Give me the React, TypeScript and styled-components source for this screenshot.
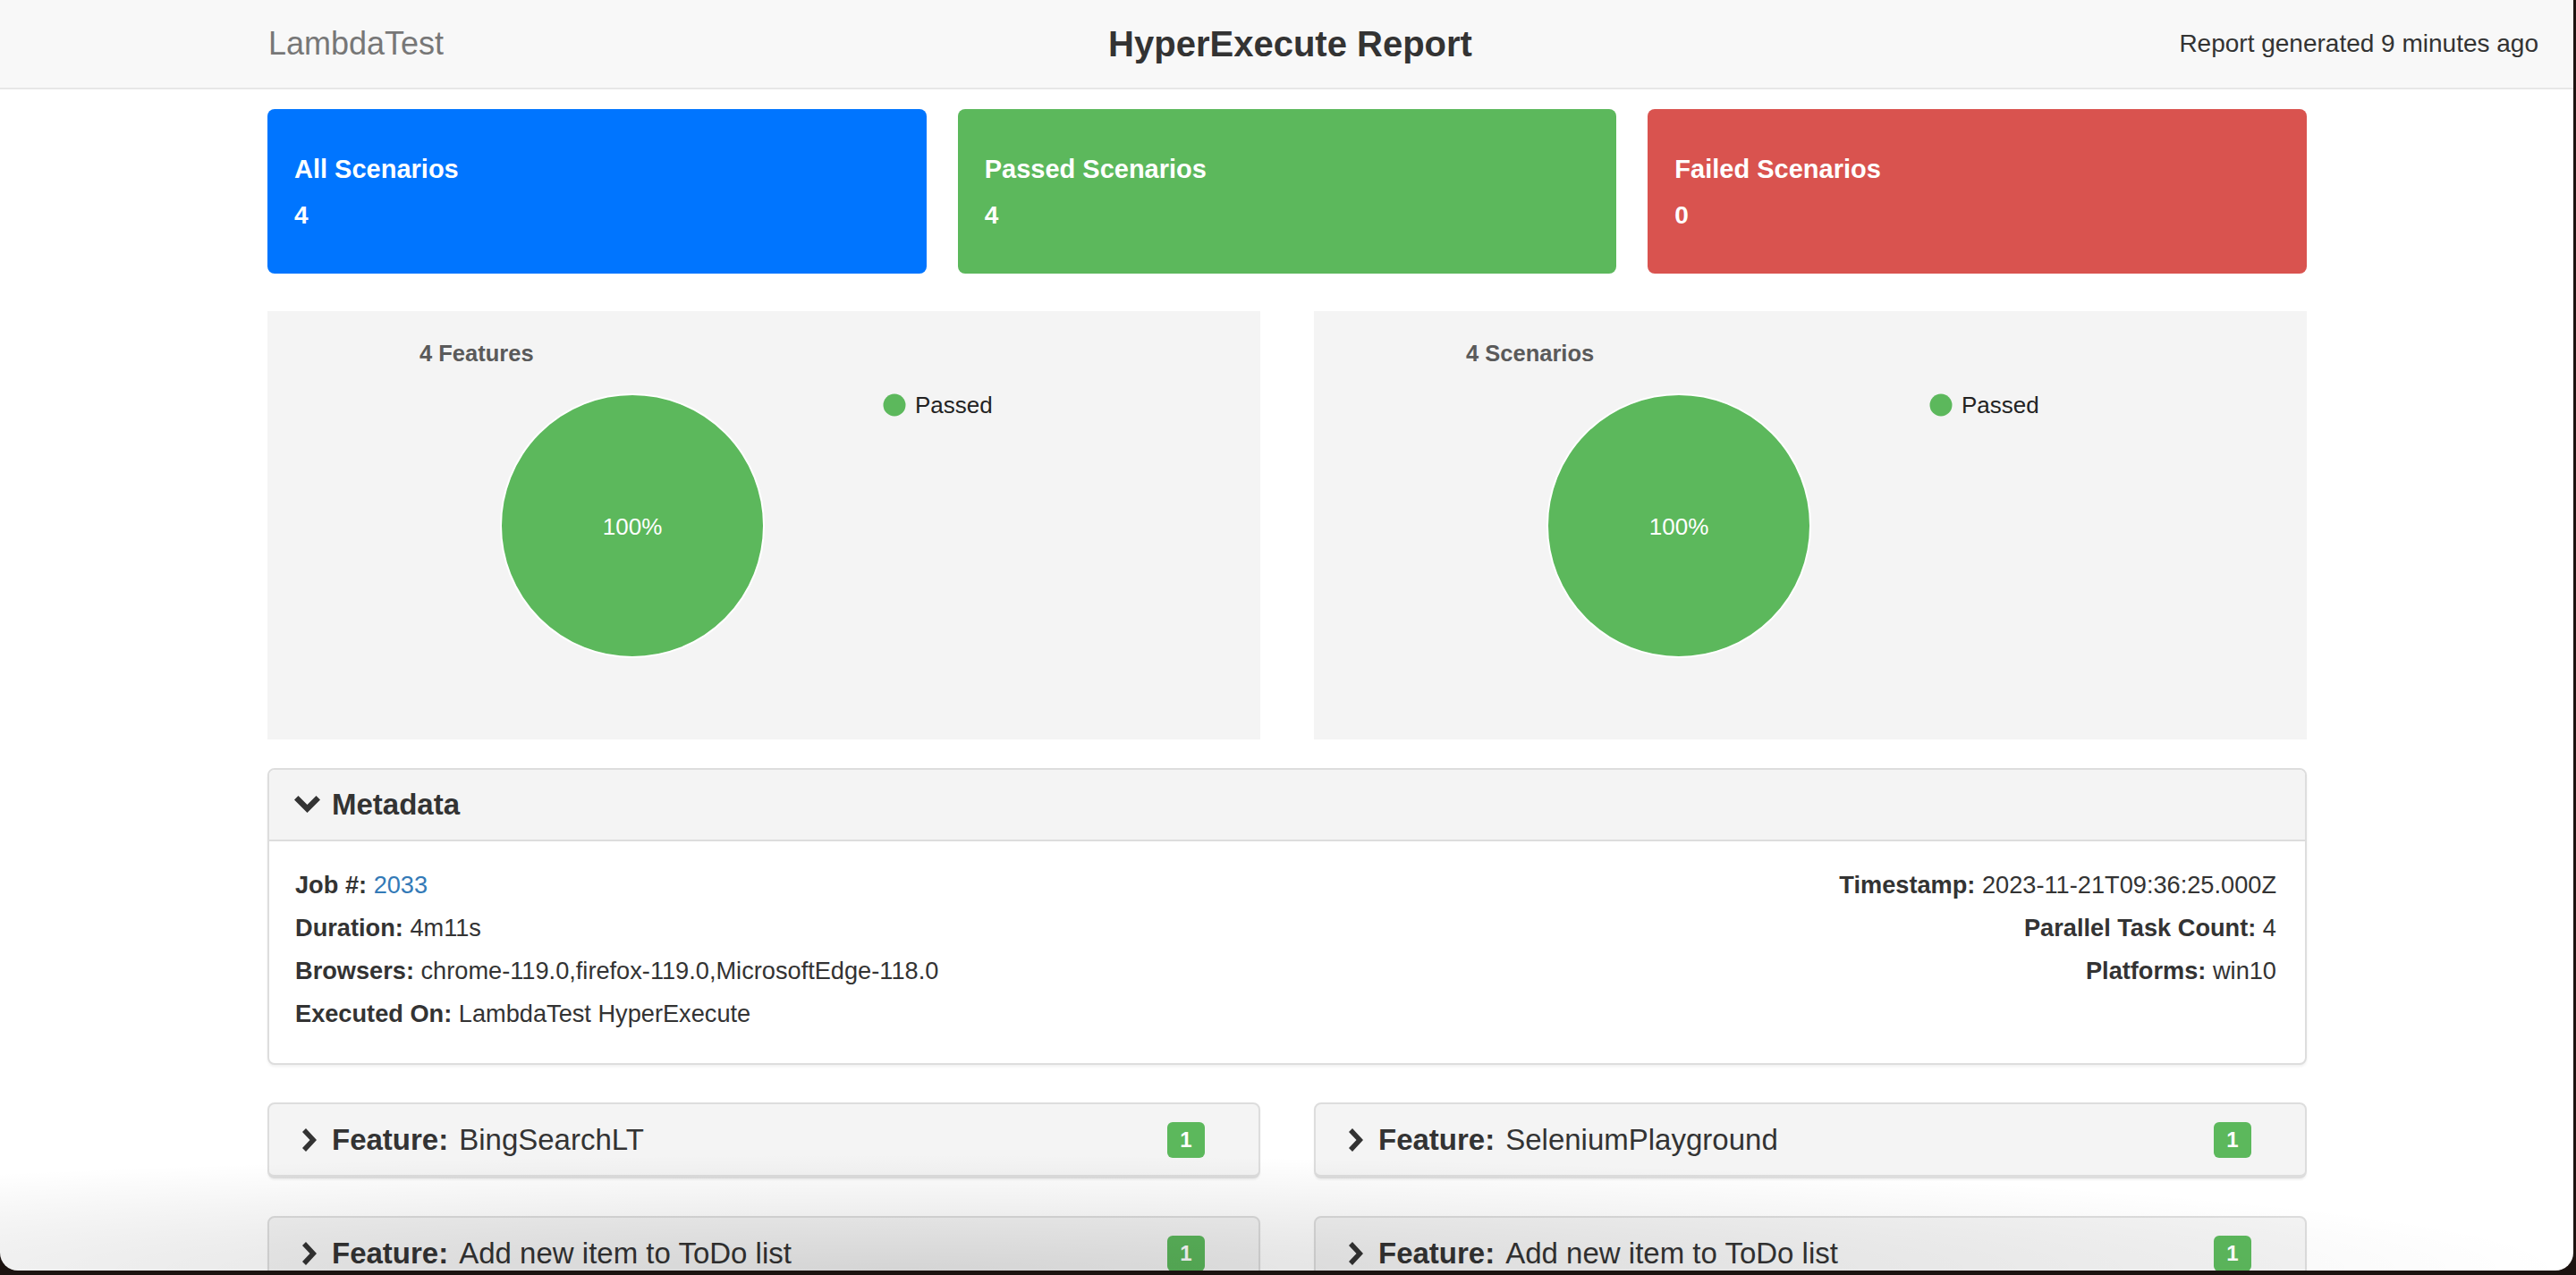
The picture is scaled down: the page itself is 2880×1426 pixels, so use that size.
import React from "react";
import styled, { createGlobalStyle } from "styled-components";

const GlobalStyle = createGlobalStyle`
  html, body { margin: 0; padding: 0; background: #1c1310; }
  body { font-family: "Liberation Sans", Arial, Helvetica, sans-serif; color: #333; }
  * { box-sizing: border-box; }
`;

const Window = styled.div`
  position: relative;
  width: 2877px;
  height: 1421px;
  background: #fff;
  overflow: hidden;
  border-radius: 0 0 20px 20px;
`;

const Navbar = styled.header`
  height: 100px;
  background: #f8f8f8;
  border-bottom: 2px solid #e7e7e7;
  display: grid;
  grid-template-columns: 1fr auto 1fr;
  align-items: center;
  padding: 0 39px;
`;

const Brand = styled.div`
  margin-left: 261px;
  font-size: 36px;
  color: #777;
`;

const Title = styled.h1`
  margin: 0 0 0 8px;
  font-size: 40px;
  font-weight: bold;
  color: #333;
`;

const Generated = styled.div`
  justify-self: end;
  font-size: 28px;
  color: #333;
`;

const Main = styled.main`
  width: 2280px;
  margin-left: 299px;
  padding-top: 22px;
`;

const SummaryRow = styled.div`
  display: grid;
  grid-template-columns: repeat(3, 1fr);
  gap: 35px;
  margin-bottom: 42px;
`;

const SummaryCard = styled.div<{ $bg: string }>`
  height: 184px;
  border-radius: 8px;
  background: ${(p) => p.$bg};
  color: #fff;
  display: flex;
  flex-direction: column;
  justify-content: center;
  gap: 16px;
  padding: 2px 30px 0;
`;

const CardTitle = styled.div`
  font-size: 29px;
  font-weight: bold;
  line-height: 36px;
`;

const CardCount = styled.div`
  font-size: 28px;
  font-weight: bold;
  line-height: 36px;
`;

const ChartRow = styled.div`
  display: grid;
  grid-template-columns: 1fr 1fr;
  gap: 60px;
  margin-bottom: 32px;
`;

const ChartPanel = styled.div`
  height: 479px;
  background: #f4f4f4;
`;

const Panel = styled.section`
  border: 2px solid #ddd;
  border-radius: 8px;
  background: #fff;
  box-shadow: 0 2px 3px rgba(0, 0, 0, 0.06);
  overflow: hidden;
  margin-bottom: 42px;
`;

const PanelHeading = styled.div`
  height: 80px;
  background: #f4f4f4;
  border-bottom: 2px solid #ddd;
  display: flex;
  align-items: center;
  gap: 13px;
  padding: 0 28px;
  font-size: 33px;
  font-weight: bold;
  color: #333;
`;

const PanelBody = styled.div`
  display: flex;
  justify-content: space-between;
  padding: 25px 32px 31px 29px;
`;

const MetaColumn = styled.div<{ $align: "left" | "right" }>`
  text-align: ${(p) => p.$align};
`;

const MetaLine = styled.div`
  font-size: 27.2px;
  line-height: 48px;
  color: #333;
  white-space: nowrap;
`;

const MetaLabel = styled.b`
  font-weight: bold;
`;

const MetaLink = styled.a`
  color: #337ab7;
  text-decoration: none;
`;

const FeatureGrid = styled.div`
  display: grid;
  grid-template-columns: 1fr 1fr;
  column-gap: 60px;
  row-gap: 42px;
`;

const FeaturePanel = styled.div`
  height: 85px;
  background: #f4f4f4;
  border: 2px solid #ddd;
  border-bottom-width: 4px;
  border-radius: 8px;
  box-shadow: 0 2px 2px rgba(0, 0, 0, 0.05);
  display: flex;
  align-items: center;
  padding: 0 60px 0 37px;
  font-size: 33px;
  color: #333;
`;

const FeatureLabel = styled.span`
  font-weight: bold;
  margin-left: 17px;
  font-size: 33px;
`;

const FeatureName = styled.span`
  margin-left: 12px;
`;

const Badge = styled.span`
  margin-left: auto;
  width: 42px;
  height: 40px;
  border-radius: 6px;
  background: #5cb85c;
  color: #fff;
  font-size: 24px;
  font-weight: bold;
  display: flex;
  align-items: center;
  justify-content: center;
`;

const BottomShade = styled.div`
  position: absolute;
  left: 0;
  right: 0;
  bottom: 0;
  height: 130px;
  pointer-events: none;
  background: radial-gradient(ellipse 65% 100% at 35% 100%, rgba(0, 0, 0, 0.13), rgba(0, 0, 0, 0) 100%);
`;

const ChevronRight = () => (
  <svg width="16" height="26" viewBox="0 0 16 26">
    <polygon points="0,4 4,0 16,13 4,26 0,22 8.5,13" fill="#333" />
  </svg>
);

const ChevronDown = () => (
  <svg width="29" height="20" viewBox="0 0 29 20">
    <polygon points="0,4.5 4.5,0 14.5,10 24.5,0 29,4.5 14.5,19" fill="#333" />
  </svg>
);

const PieChart = ({ title }: { title: string }) => (
  <svg width="1110" height="479" viewBox="0 0 1110 479">
    <text x="170" y="56" fontSize="25.5" fontWeight="bold" fill="#5a5a5a" fontFamily="Liberation Sans, Arial, sans-serif">
      {title}
    </text>
    <circle cx="408" cy="240" r="147" fill="#5cb85c" stroke="#fff" strokeWidth="2" />
    <text x="408" y="249.5" fontSize="26" textAnchor="middle" fill="#fff" fontFamily="Liberation Sans, Arial, sans-serif">
      100%
    </text>
    <circle cx="701" cy="105" r="12.5" fill="#5cb85c" />
    <text x="724" y="114" fontSize="26" fill="#222" fontFamily="Liberation Sans, Arial, sans-serif">
      Passed
    </text>
  </svg>
);

const features = ["BingSearchLT", "SeleniumPlayground", "Add new item to ToDo list", "Add new item to ToDo list"];

export default function App() {
  return (
    <>
      <GlobalStyle />
      <Window>
        <Navbar>
          <Brand>LambdaTest</Brand>
          <Title>HyperExecute Report</Title>
          <Generated>Report generated 9 minutes ago</Generated>
        </Navbar>
        <Main>
          <SummaryRow>
            <SummaryCard $bg="#0075ff">
              <CardTitle>All Scenarios</CardTitle>
              <CardCount>4</CardCount>
            </SummaryCard>
            <SummaryCard $bg="#5cb85c">
              <CardTitle>Passed Scenarios</CardTitle>
              <CardCount>4</CardCount>
            </SummaryCard>
            <SummaryCard $bg="#d9534f">
              <CardTitle>Failed Scenarios</CardTitle>
              <CardCount>0</CardCount>
            </SummaryCard>
          </SummaryRow>
          <ChartRow>
            <ChartPanel>
              <PieChart title="4 Features" />
            </ChartPanel>
            <ChartPanel>
              <PieChart title="4 Scenarios" />
            </ChartPanel>
          </ChartRow>
          <Panel>
            <PanelHeading>
              <ChevronDown />
              Metadata
            </PanelHeading>
            <PanelBody>
              <MetaColumn $align="left">
                <MetaLine>
                  <MetaLabel>Job #:</MetaLabel> <MetaLink href="#">2033</MetaLink>
                </MetaLine>
                <MetaLine>
                  <MetaLabel>Duration:</MetaLabel> 4m11s
                </MetaLine>
                <MetaLine>
                  <MetaLabel>Browsers:</MetaLabel> chrome-119.0,firefox-119.0,MicrosoftEdge-118.0
                </MetaLine>
                <MetaLine>
                  <MetaLabel>Executed On:</MetaLabel> LambdaTest HyperExecute
                </MetaLine>
              </MetaColumn>
              <MetaColumn $align="right">
                <MetaLine>
                  <MetaLabel>Timestamp:</MetaLabel> 2023-11-21T09:36:25.000Z
                </MetaLine>
                <MetaLine>
                  <MetaLabel>Parallel Task Count:</MetaLabel> 4
                </MetaLine>
                <MetaLine>
                  <MetaLabel>Platforms:</MetaLabel> win10
                </MetaLine>
              </MetaColumn>
            </PanelBody>
          </Panel>
          <FeatureGrid>
            {features.map((f, i) => (
              <FeaturePanel key={i}>
                <ChevronRight />
                <FeatureLabel>Feature:</FeatureLabel>
                <FeatureName>{f}</FeatureName>
                <Badge>1</Badge>
              </FeaturePanel>
            ))}
          </FeatureGrid>
        </Main>
        <BottomShade />
      </Window>
    </>
  );
}
